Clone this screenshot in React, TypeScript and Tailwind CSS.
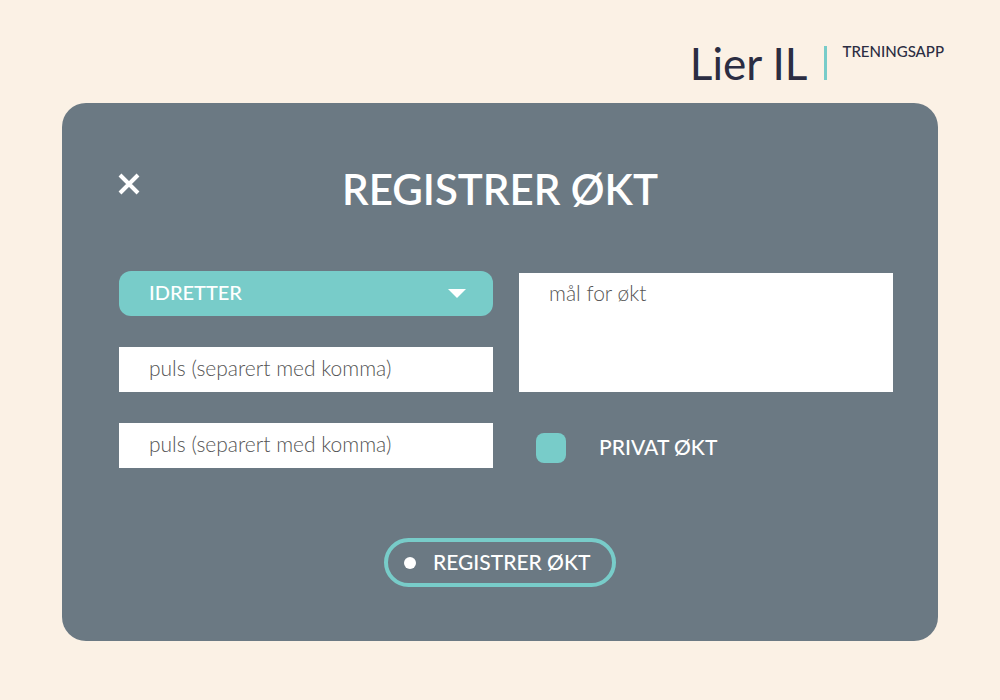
const inputStyle =
  'block h-[45px] w-full bg-white px-[30px] pb-1 text-[21px] font-light text-[#444444] outline-none placeholder:text-[#555555] placeholder:opacity-100 focus:ring-2 focus:ring-[#78ccc9]';

function Brand() {
  return (
    <header className="flex items-start justify-end px-14 pt-9 text-[#2b2d42]">
      <p className="text-[44px] leading-[54px]">Lier IL</p>
      <span aria-hidden="true" className="mt-[10px] ml-[17px] h-[34px] w-[3px] bg-[#78ccc9]" />
      <p className="mt-[7px] ml-[15px] text-[15px] leading-4 font-medium">TRENINGSAPP</p>
    </header>
  );
}

function SportSelect() {
  return (
    <div className="relative">
      <select
        aria-label="Idretter"
        defaultValue=""
        className="block h-[45px] w-full appearance-none rounded-xl bg-[#78ccc9] px-[30px] pb-[3px] text-[20px] font-medium text-white outline-none"
      >
        <option value="">IDRETTER</option>
      </select>
      <svg
        aria-hidden="true"
        viewBox="0 0 18 9"
        className="pointer-events-none absolute top-[18px] right-[27px] h-[9px] w-[18px] fill-white"
      >
        <path d="M0 0H18L9 9Z" />
      </svg>
    </div>
  );
}

export default function App() {
  return (
    <div className="min-h-screen bg-[#fbf1e5] pb-14 font-['Lato','Liberation_Sans',sans-serif]">
      <Brand />
      <main className="mx-[62px] mt-[13px] rounded-3xl bg-[#6b7983] pt-[58px] pb-[54px] text-white">
        <div className="grid grid-cols-[1fr_auto_1fr] items-start px-14">
          <button type="button" aria-label="Lukk" className="mt-3 w-fit">
            <svg viewBox="0 0 22 22" className="h-[22px] w-[22px] stroke-white stroke-[4]">
              <path d="M2 2L20 20M20 2L2 20" />
            </svg>
          </button>
          <h1 className="text-[42px] leading-[56px] font-semibold">REGISTRER ØKT</h1>
        </div>

        <form>
          <div className="mt-[54px] grid grid-cols-2 gap-x-[26px] pr-[45px] pl-[57px]">
            <div className="space-y-[31px]">
              <SportSelect />
              <input aria-label="Puls" placeholder="puls (separert med komma)" className={inputStyle} />
              <input aria-label="Puls 2" placeholder="puls (separert med komma)" className={inputStyle} />
            </div>
            <div className="pt-0.5">
              <textarea
                aria-label="Mål for økt"
                placeholder="mål for økt"
                className="block h-[119px] w-full resize-none bg-white px-[30px] py-1.5 text-[21px] leading-[28px] font-light text-[#444444] outline-none placeholder:text-[#555555] placeholder:opacity-100 focus:ring-2 focus:ring-[#78ccc9]"
              />
              <label className="mt-[41px] ml-[17px] flex w-fit items-center gap-[33px] text-[21px] leading-[30px] font-medium">
                <input
                  type="checkbox"
                  className="h-[30px] w-[30px] appearance-none rounded-lg bg-[#78ccc9] checked:border-4 checked:border-white"
                />
                <span className="pb-[3px] leading-[27px]">PRIVAT ØKT</span>
              </label>
            </div>
          </div>

          <button
            type="submit"
            className="mx-auto mt-[70px] flex h-[49px] w-[232px] items-center gap-[17px] rounded-full border-4 border-[#78ccc9] pl-4 text-[21px] font-medium whitespace-nowrap"
          >
            <span aria-hidden="true" className="h-3 w-3 rounded-full bg-white" />
            <span className="pb-0.5">REGISTRER ØKT</span>
          </button>
        </form>
      </main>
    </div>
  );
}
